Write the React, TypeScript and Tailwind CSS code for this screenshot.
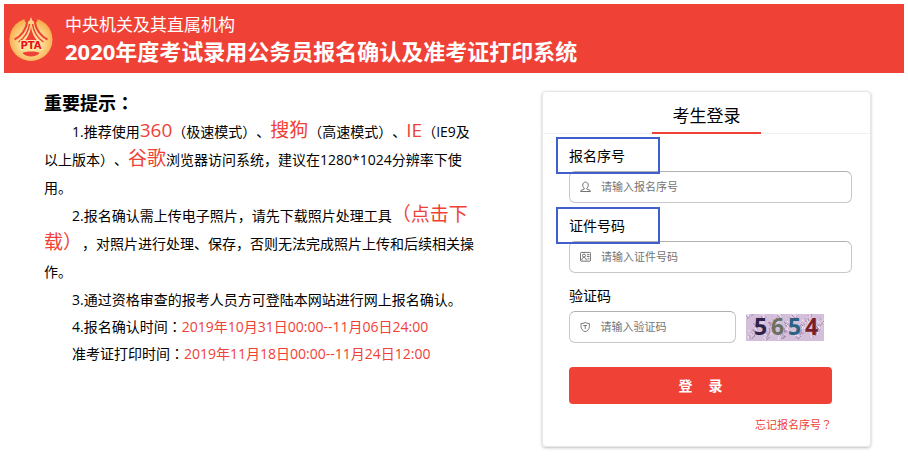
import { useState } from "react";
import type { ReactNode } from "react";

const RED = "#ef4136";

function Logo() {
  return (
    <svg width="44" height="44" viewBox="0 0 44 44" className="shrink-0" aria-hidden="true">
      <defs>
        <radialGradient id="gold" cx="50%" cy="55%" r="52%">
          <stop offset="0%" stopColor="#ffedb0" />
          <stop offset="60%" stopColor="#fdd587" />
          <stop offset="100%" stopColor="#f8ad4e" />
        </radialGradient>
      </defs>
      <circle cx="22" cy="22.500" r="21.500" fill="url(#gold)" />
      <path d="M15 0h14l-1 5H16z" fill={RED} />
      <path d="M22 0l2 5h-4z" fill="#fcd17f" />
      <path d="M19 4h6l1 4h-8z" fill="#fcd17f" />
      <g fill="none" stroke={RED}>
        <path d="M18.500 4C17 12 12.500 19 5.500 22.500" strokeWidth="2" />
        <path d="M25.500 4C27 12 31.500 19 38.500 22.500" strokeWidth="2" />
        <path d="M20.500 7C19.500 14 15.500 21 9.500 25" strokeWidth="1.500" />
        <path d="M23.500 7C24.500 14 28.500 21 34.500 25" strokeWidth="1.500" />
      </g>
      <path d="M22 10c1 6 3 10 6.500 14h-3.500c-1.500-1.500-4.500-1.500-6 0h-3.500C19 20 21 16 22 10z" fill={RED} />
      <path d="M13.500 36c2-2 15-2 17 0-3 4.500-14 4.500-17 0z" fill={RED} />
      <text
        x="22"
        y="32"
        textAnchor="middle"
        fontFamily="'DejaVu Sans', sans-serif"
        fontSize="10"
        fontWeight="bold"
        fill="#e5101a"
        stroke="#ffe9a8"
        strokeWidth="2"
        paintOrder="stroke"
      >
        PTA
      </text>
    </svg>
  );
}

function UserIcon() {
  return (
    <svg width="12" height="12" viewBox="0 0 12 12" fill="none" stroke="#666" strokeWidth="1">
      <path d="M4.600 7.200C3.300 6.400 3 5.200 3 3.800 3 1.900 4.300.7 6 .7s3 1.200 3 3.100c0 1.400-.3 2.600-1.600 3.400v1l3.400 1.400c.4.200.5.600.5 1.300H.7c0-.7.1-1.100.5-1.300l3.400-1.400z" />
    </svg>
  );
}

function CardIcon() {
  return (
    <svg width="12" height="12" viewBox="0 0 12 12" fill="none" stroke="#666" strokeWidth="1">
      <rect x="0.500" y="1" width="11" height="9.500" rx="1" />
      <circle cx="4.300" cy="4.400" r="1.600" />
      <path d="M1.800 9.500c.2-2 1.200-3 2.500-3s2.300 1 2.500 3M7.500 3.500h2.800M7.500 5.500h2.800M8 8h2.300" />
    </svg>
  );
}

function ShieldIcon() {
  return (
    <svg width="12" height="12" viewBox="0 0 12 12" fill="none" stroke="#666" strokeWidth="1">
      <path d="M6 .8c1.400.9 3 1.200 4.800 1.200v3.500C10.800 8.300 9 10.300 6 11.400 3 10.300 1.200 8.300 1.200 5.500V2C3 2 4.600 1.700 6 .8z" />
      <path d="M3.800 4.300h4.400M6 4.300v4" />
    </svg>
  );
}

const digits = [
  { char: "5", x: 8, color: "#2e2346" },
  { char: "6", x: 25, color: "#6c7062" },
  { char: "5", x: 42, color: "#2a6280" },
  { char: "4", x: 59, color: "#7a1e2b" },
];

// short strokes scattered over the captcha background
const noise = Array.from({ length: 190 }, (_, i) => ({
  x: (i * 37) % 78,
  y: (i * 17 + ((i * i) % 7)) % 27,
  dx: ((i * 13) % 9) - 4,
  dy: ((i * 7) % 7) - 3,
  color: ["#b79cc0", "#f1e8f5", "#a588b0", "#e2cbe3"][(i * 3 + (i >> 2)) % 4],
}));

function Captcha() {
  return (
    <svg width="78" height="27" viewBox="0 0 78 27" className="overflow-visible" role="img" aria-label="验证码">
      <clipPath id="captchaBox">
        <rect width="78" height="27" />
      </clipPath>
      <g clipPath="url(#captchaBox)">
        <rect width="78" height="27" fill="#d3bfd9" />
        {noise.map((n, i) => (
          <path key={i} d={`M${n.x} ${n.y}l${n.dx} ${n.dy}`} stroke={n.color} strokeWidth="1" />
        ))}
      </g>
      {digits.map((d) => (
        <text key={d.x} x={d.x} y="21" fontFamily="'Open Sans', sans-serif" fontSize="23" fontWeight="700" fill={d.color}>
          {d.char}
        </text>
      ))}
    </svg>
  );
}

type FieldProps = {
  id: string;
  label: string;
  placeholder: string;
  icon: ReactNode;
  marked?: boolean;
  extra?: ReactNode;
};

function Field({ id, label, placeholder, icon, marked, extra }: FieldProps) {
  const [value, setValue] = useState("");

  return (
    <div className="mb-2">
      <div className="relative flex h-[30px] items-center">
        <label htmlFor={id} className="text-sm text-black">
          {label}
        </label>
        {marked && (
          <span className="pointer-events-none absolute -left-[13px] -top-1 z-10 h-[37px] w-[104px] border-2 border-[#3f5fcd]" />
        )}
      </div>
      <div className="flex items-center gap-[10px]">
        <div className="flex h-8 flex-1 items-center gap-[10px] rounded-md border border-[#c8c8c8] border-t-[#b0b0b0] pl-[10px]">
          {icon}
          <input
            id={id}
            type="text"
            value={value}
            onChange={(e) => setValue(e.target.value)}
            placeholder={placeholder}
            className="w-full min-w-0 bg-transparent text-[11px] text-black outline-none placeholder:text-[#757575]"
          />
        </div>
        {extra}
      </div>
    </div>
  );
}

function Big({ children }: { children: ReactNode }) {
  return <span className="text-[19px] leading-none text-[#ef4136]">{children}</span>;
}

// punctuation centred in its full-width box
function Mark({ children }: { children: ReactNode }) {
  return <span className="font-['Noto_Sans_CJK_TC',sans-serif] leading-none">{children}</span>;
}

export default function App() {
  return (
    <div className="bg-white p-1 font-['Open_Sans','Noto_Sans_CJK_SC',sans-serif] text-black [text-spacing-trim:space-all]">
      <header className="flex h-[69px] items-center gap-3 bg-[#ef4136] pl-[5px] text-white">
        <Logo />
        <div>
          <p className="text-[17px] leading-6">中央机关及其直属机构</p>
          <h1 className="text-[22px] font-bold leading-7">2020年度考试录用公务员报名确认及准考证打印系统</h1>
        </div>
      </header>

      <main className="flex items-start gap-[68px] pl-10 pr-[33px] pt-[18px]">
        <section className="min-w-0 flex-1 text-sm leading-7">
          <h2 className="mb-[3px] text-lg font-bold leading-6">
            重要提示<Mark>：</Mark>
          </h2>
          <p className="indent-7">
            1.推荐使用<Big>360</Big>（极速模式）、<Big>搜狗</Big>（高速模式）、<Big>IE</Big>（IE9及以上版本）、<Big>谷歌</Big>
            浏览器访问系统，建议在1280*1024分辨率下使用。
          </p>
          <p className="indent-7">
            2.报名确认需上传电子照片，请先下载照片处理工具
            <a href="#download">
              <Big>（点击下载）</Big>
            </a>
            ，对照片进行处理、保存，否则无法完成照片上传和后续相关操作。
          </p>
          <p className="indent-7 leading-[27px]">3.通过资格审查的报考人员方可登陆本网站进行网上报名确认。</p>
          <p className="indent-7 leading-[27px]">
            4.报名确认时间<Mark>：</Mark>
            <span className="text-[#ef4136]">2019年10月31日00:00--11月06日24:00</span>
          </p>
          <p className="indent-7 leading-[27px]">
            准考证打印时间<Mark>：</Mark>
            <span className="text-[#ef4136]">2019年11月18日00:00--11月24日12:00</span>
          </p>
        </section>

        {/* Login card */}
        <section className="w-[329px] shrink-0 rounded border border-[#e6e6e6] shadow-[0_1px_3px_rgba(0,0,0,0.25)]">
          <div className="flex justify-center border-b border-[#f0f0f0]">
            <h2 className="-mb-px w-[109px] border-b-2 border-[#ef4136] pb-1 pt-3 text-center text-[17px] leading-6">考生登录</h2>
          </div>
          <form className="pb-3 pl-[26px] pr-[18px] pt-[7px]" onSubmit={(e) => e.preventDefault()}>
            <Field id="regNo" label="报名序号" placeholder="请输入报名序号" icon={<UserIcon />} marked />
            <Field id="idNo" label="证件号码" placeholder="请输入证件号码" icon={<CardIcon />} marked />
            <Field
              id="code"
              label="验证码"
              placeholder="请输入验证码"
              icon={<ShieldIcon />}
              extra={
                <div className="mr-7">
                  <Captcha />
                </div>
              }
            />
            <div className="mr-5 mt-6">
              <button type="submit" className="flex h-[37px] w-full items-center justify-center gap-4 rounded-sm bg-[#ef4136] text-sm font-bold text-white">
                <span>登</span>
                <span>录</span>
              </button>
              <a href="#forgot" className="mt-3 block text-right text-[11px] leading-[18px] text-[#ef4136]">
                忘记报名序号<Mark>？</Mark>
              </a>
            </div>
          </form>
        </section>
      </main>
    </div>
  );
}
